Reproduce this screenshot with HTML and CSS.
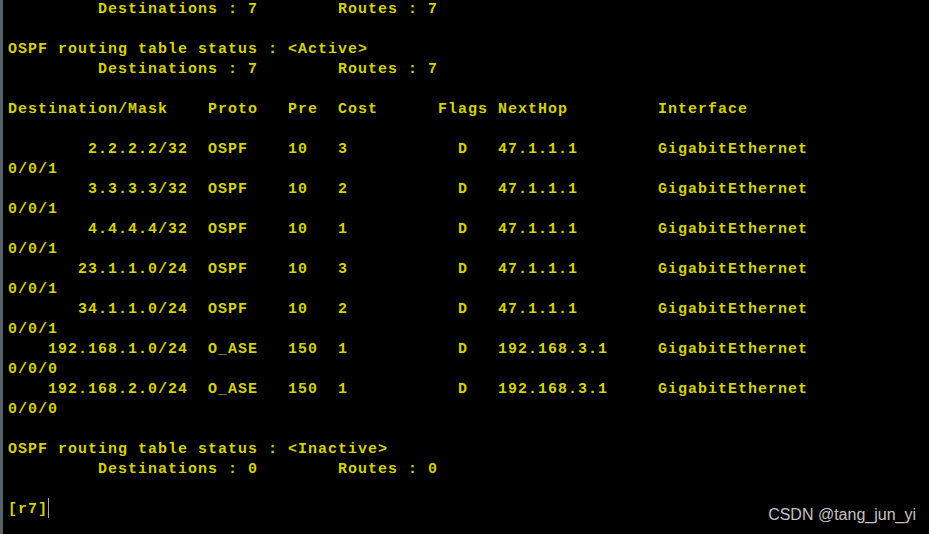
FILE: index.html
```html
<!DOCTYPE html>
<html>
<head>
<meta charset="utf-8">
<link rel="stylesheet" href="styles.css">
</head>
<body>
<div class="terminal">
<pre class="screen">         Destinations : 7        Routes : 7

OSPF routing table status : &lt;Active&gt;
         Destinations : 7        Routes : 7

Destination/Mask    Proto   Pre  Cost      Flags NextHop         Interface

        2.2.2.2/32  OSPF    10   3           D   47.1.1.1        GigabitEthernet
0/0/1
        3.3.3.3/32  OSPF    10   2           D   47.1.1.1        GigabitEthernet
0/0/1
        4.4.4.4/32  OSPF    10   1           D   47.1.1.1        GigabitEthernet
0/0/1
       23.1.1.0/24  OSPF    10   3           D   47.1.1.1        GigabitEthernet
0/0/1
       34.1.1.0/24  OSPF    10   2           D   47.1.1.1        GigabitEthernet
0/0/1
    192.168.1.0/24  O_ASE   150  1           D   192.168.3.1     GigabitEthernet
0/0/0
    192.168.2.0/24  O_ASE   150  1           D   192.168.3.1     GigabitEthernet
0/0/0

OSPF routing table status : &lt;Inactive&gt;
         Destinations : 0        Routes : 0
</pre>
<pre class="screen prompt">[r7]<span class="cursor"></span></pre>
<div class="watermark">CSDN @tang_jun_yi</div>
</div>
</body>
</html>
```

FILE: styles.css
```css
html, body {
  margin: 0;
  padding: 0;
  background: #000;
  width: 929px;
  height: 534px;
  overflow: hidden;
}

.terminal {
  position: relative;
  width: 926px;
  height: 534px;
  border-left: 3px solid #56616b;
  background: #000;
  display: flex;
  flex-direction: column;
  align-items: flex-start;
}

.screen {
  margin: 0;
  padding-left: 5px;
  font-family: "Liberation Mono", "DejaVu Sans Mono", monospace;
  font-weight: bold;
  font-size: 15px;
  letter-spacing: 1px;
  line-height: 20px;
  color: #d2d200;
  white-space: pre;
}

.prompt {
  margin-top: 20px;
}

.cursor {
  display: inline-block;
  width: 1px;
  height: 20px;
  vertical-align: top;
  position: relative;
  top: -2px;
  background: #a8a8a8;
}

.watermark {
  position: absolute;
  right: 13px;
  bottom: 11px;
  font-family: "Liberation Sans", Arial, sans-serif;
  font-size: 16px;
  line-height: 16px;
  color: #c4c4c4;
}
```
